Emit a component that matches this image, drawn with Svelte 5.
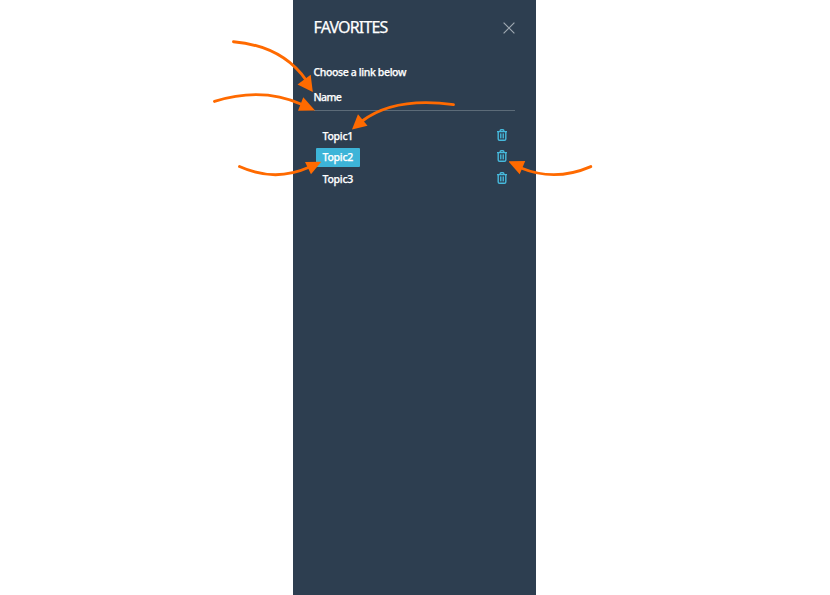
<script>
  let selected = $state('Topic2');
  const topics = ['Topic1', 'Topic2', 'Topic3'];
  const arrows = [
    { line: 'M233.5 41.7Q282 46 306 80', head: '297.5,84.5 310.7,74.7 312.8,92' },
    { line: 'M214.5 101.4Q262 86.5 302 104.5', head: '303.3,97.2 298,110.7 315,110.4' },
    { line: 'M239.5 166.5Q275 182.5 309 167.3', head: '305,162 311,174.3 321.3,161.7' },
    { line: 'M453.5 104.6Q394 96.5 361.5 121.5', head: '358,114.3 367.5,125.7 352,129.5' },
    { line: 'M590.8 166.6Q555 182 521 168', head: '525.2,161 519.7,174.3 508.3,161.3' }
  ];
</script>

<div class="page">
  <aside>
    <header>
      <h1>FAVORITES</h1>
      <button class="close" aria-label="Close">
        <svg width="12" height="12" viewBox="0 0 12 12"><path d="M.6.6l10.8 10.8M11.4.6L.6 11.4" /></svg>
      </button>
    </header>
    <p>Choose a link below</p>
    <div class="name">Name</div>
    <ul>
      {#each topics as topic}
        <li>
          <button class="topic" class:active={topic === selected} onclick={() => (selected = topic)}>{topic}</button>
          <button class="trash" aria-label="Delete">
            <svg width="10" height="12" viewBox="0 0 10 12">
              <path d="M0 2.6H10M3.2 2.3V1.5Q3.2.7 4 .7H6Q6.8.7 6.8 1.5V2.3M1.2 2.8V10Q1.2 11.3 2.5 11.3H7.5Q8.8 11.3 8.8 10V2.8" />
              <path class="ribs" d="M3.5 4.4V9.4M5 4.4V9.4M6.5 4.4V9.4" />
            </svg>
          </button>
        </li>
      {/each}
    </ul>
  </aside>
  <svg class="arrows" width="830" height="595" viewBox="0 0 830 595">
    {#each arrows as arrow}
      <path d={arrow.line} />
      <polygon points={arrow.head} />
    {/each}
  </svg>
</div>

<style>
  :global(body) { margin: 0; background: #fff; }
  .page { position: relative; height: 595px; display: flex; overflow: hidden; }
  aside {
    box-sizing: border-box;
    width: 243px;
    height: 595px;
    margin-left: 293px;
    padding: 17px 21.5px 0 20.5px;
    background: #2d3e50;
    color: #fff;
    font: 500 10.5px/16px "Noto Sans", "Open Sans", sans-serif;
    -webkit-text-stroke: 0.25px #fff;
  }
  header { display: flex; justify-content: space-between; align-items: center; height: 21px; }
  h1 { margin: 0; font-size: 16px; font-weight: 400; line-height: 21px; letter-spacing: -0.83px; }
  button { border: 0; padding: 0; background: none; color: inherit; font: inherit; display: block; }
  svg { display: block; fill: none; }
  .close svg { stroke: #a0a9b2; stroke-width: 1.2; }
  p { margin: 26px 0 0; letter-spacing: -0.37px; }
  .name { height: 21px; margin-top: 9px; border-bottom: 1px solid #5c6b78; letter-spacing: -0.6px; }
  ul { list-style: none; margin: 15px 0 0; padding: 0 7.5px 0 2.5px; }
  li { display: flex; justify-content: space-between; height: 21.5px; }
  .topic {
    box-sizing: border-box;
    width: 44px;
    height: 19px;
    padding-left: 6.5px;
    border-radius: 1px;
    line-height: 20px;
    text-align: left;
    letter-spacing: -0.25px;
  }
  .topic.active { background: #3db4d8; line-height: 18px; }
  .trash { display: flex; align-items: flex-start; height: 19px; padding-top: 2.7px; }
  .trash svg { stroke: #46b9dc; stroke-width: 1.4; }
  .trash .ribs { stroke-width: 0.9; }
  .arrows { position: absolute; left: 0; top: 0; pointer-events: none; }
  .arrows path { stroke: #ff6a00; stroke-width: 2.9; stroke-linecap: round; }
  .arrows polygon { fill: #ff6a00; }
</style>
